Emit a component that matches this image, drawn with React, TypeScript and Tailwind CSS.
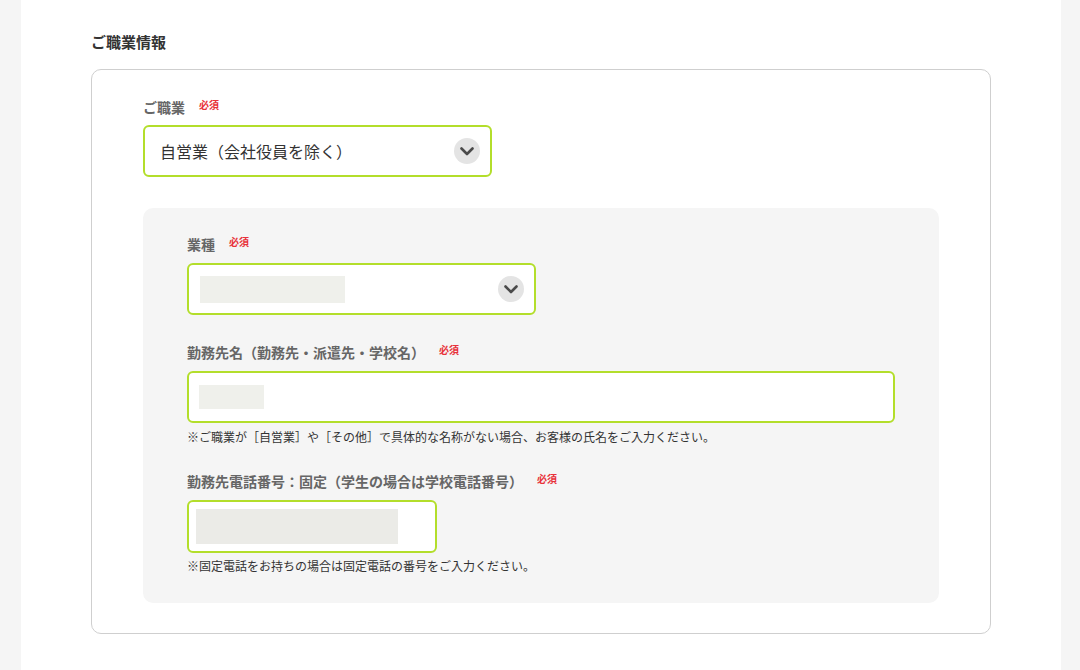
import React from "react";

const font = { fontFamily: '"Noto Sans CJK JP", "Noto Sans", sans-serif' };

function Chevron() {
  return (
    <div className="w-[26px] h-[26px] rounded-full bg-[#e4e4e4] flex items-center justify-center shrink-0">
      <svg width="14" height="9" viewBox="0 0 14 9" fill="none">
        <path d="M1.5 1.5 L7 7 L12.5 1.5" stroke="#4a4a4a" strokeWidth="2.6" strokeLinecap="round" strokeLinejoin="round" />
      </svg>
    </div>
  );
}

function Label({ text }: { text: string }) {
  return (
    <div className="flex items-center h-[18px]">
      <span className="text-[14px] leading-[18px] font-bold text-[#666]">{text}</span>
      <span className="ml-[14px] text-[10px] leading-[18px] font-bold text-[#e8323a] -translate-y-[2px]">必須</span>
    </div>
  );
}

export default function App() {
  return (
    <div className="min-h-[670px] bg-[#f5f5f5]" style={font}>
      <div className="mx-[21px] w-[1040px] min-h-[670px] bg-white pt-[32px] px-[70px]">
        <h2 className="text-[15px] leading-[20px] font-bold text-[#333]">ご職業情報</h2>
        <div className="mt-[17px] w-[900px] border border-[#cfcfcf] rounded-[10px] pt-[28px] pb-[30px] px-[51px]">
          <Label text="ご職業" />
          <div className="mt-[9px] w-[349px] h-[52px] border-2 border-[#b3de2b] rounded-[6px] flex items-center justify-between pl-[15px] pr-[10px] bg-white">
            <span className="text-[16px] text-[#333]">自営業（会社役員を除く）</span>
            <Chevron />
          </div>

          <div className="mt-[31px] bg-[#f5f5f5] rounded-[10px] pt-[27px] pb-[28px] pl-[44px] pr-[44px]">
            <Label text="業種" />
            <div className="mt-[10px] w-[349px] h-[52px] border-2 border-[#b3de2b] rounded-[6px] flex items-center justify-between pl-[11px] pr-[10px] bg-white">
              <div className="w-[145px] h-[27px] bg-[#eff0eb]" />
              <Chevron />
            </div>

            <div className="mt-[28px]">
              <Label text="勤務先名（勤務先・派遣先・学校名）" />
            </div>
            <div className="mt-[10px] w-[708px] h-[52px] border-2 border-[#b3de2b] rounded-[6px] flex items-center pl-[10px] bg-white">
              <div className="w-[65px] h-[24px] bg-[#eff0eb]" />
            </div>
            <p className="mt-[5px] text-[12px] leading-[18px] text-[#333]">
              ※ご職業が［自営業］や［その他］で具体的な名称がない場合、お客様の氏名をご入力ください。
            </p>

            <div className="mt-[26px]">
              <Label text="勤務先電話番号：固定（学生の場合は学校電話番号）" />
            </div>
            <div className="mt-[10px] w-[250px] h-[53px] border-2 border-[#b3de2b] rounded-[6px] flex items-center pl-[7px] bg-white">
              <div className="w-[202px] h-[35px] bg-[#ebebe7]" />
            </div>
            <p className="mt-[4px] text-[12px] leading-[18px] text-[#333]">
              ※固定電話をお持ちの場合は固定電話の番号をご入力ください。
            </p>
          </div>
        </div>
      </div>
    </div>
  );
}
